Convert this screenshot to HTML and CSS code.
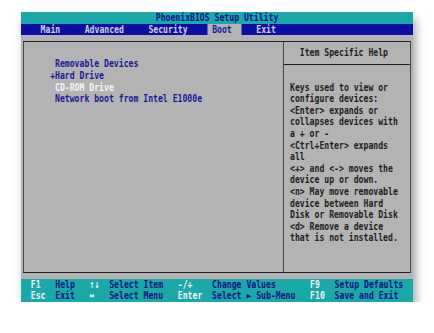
FILE: index.html
```html
<!DOCTYPE html>
<html lang="en">
<head>
    <meta charset="UTF-8">
    <meta name="viewport" content="width=device-width, initial-scale=1.0">
    <title>PhoenixBIOS Setup Utility</title>
    <link rel="stylesheet" href="styles.css">
</head>
<body>
    <div class="monitor">
        <div class="screen">
            <div class="title-bar">PhoenixBIOS Setup Utility</div>

            <div class="menu-bar">
                <span class="menu-item">Main</span>
                <span class="menu-item">Advanced</span>
                <span class="menu-item">Security</span>
                <span class="menu-item active">Boot</span>
                <span class="menu-item">Exit</span>
            </div>

            <div class="main">
                <div class="frame">
                    <div class="boot-list">
                        <div class="boot-item"><span class="marker"></span>Removable Devices</div>
                        <div class="boot-item"><span class="marker">+</span>Hard Drive</div>
                        <div class="boot-item selected"><span class="marker"></span>CD-ROM Drive</div>
                        <div class="boot-item"><span class="marker"></span>Network boot from Intel E1000e</div>
                    </div>

                    <div class="help">
                        <div class="help-title">Item Specific Help</div>
                        <div class="help-text">Keys used to view or
configure devices:
&lt;Enter&gt; expands or
collapses devices with
a + or -
&lt;Ctrl+Enter&gt; expands
all
&lt;+&gt; and &lt;-&gt; moves the
device up or down.
&lt;n&gt; May move removable
device between Hard
Disk or Removable Disk
&lt;d&gt; Remove a device
that is not installed.</div>
                    </div>
                </div>
            </div>

            <div class="footer">
                <span class="key">F1</span><span class="desc">Help</span>
                <span class="key">&uarr;&darr;</span><span class="desc">Select Item</span>
                <span class="key">-/+</span><span class="desc">Change Values</span>
                <span class="key">F9</span><span class="desc">Setup Defaults</span>

                <span class="key">Esc</span><span class="desc">Exit</span>
                <span class="key">&harr;</span><span class="desc">Select Menu</span>
                <span class="key">Enter</span><span class="desc">Select &#9658; Sub-Menu</span>
                <span class="key">F10</span><span class="desc">Save and Exit</span>
            </div>
        </div>
    </div>
</body>
</html>
```

FILE: styles.css
```css
:root {
    --teal: #1ba8a8;
    --blue: #0e0ea4;
    --gray: #b3b3b3;
    --ink: #1a1a9a;
    --dark: #222222;
    --row: 11.6px;
    --vline: 1.35px;
}

body {
    margin: 0;
    background-color: #ffffff;
}

.monitor {
    width: 392px;
    margin: 12px 0 0 21px;
    overflow: hidden;
    box-shadow: 3px 7px 9px rgba(0, 0, 0, 0.35);
}

/* 80x25 text screen, drawn wide then squeezed to 392px */
.screen {
    width: 80ch;
    font-family: 'DejaVu Sans Mono', 'Liberation Mono', monospace;
    font-size: 11px;
    font-weight: bold;
    line-height: var(--row);
    transform: scaleX(0.74);
    transform-origin: left top;
}

.title-bar {
    height: var(--row);
    background-color: var(--teal);
    color: #12128c;
    text-align: center;
}

.menu-bar {
    display: flex;
    height: var(--row);
    padding-left: 4ch;
    background-color: var(--blue);
    color: #cfcfdc;
}

.menu-item {
    margin-right: 5ch;
}

.menu-item.active {
    margin-left: -1ch;
    margin-right: 3ch;
    padding: 0 2ch 0 1ch;
    background-color: var(--gray);
    color: var(--ink);
}

.main {
    display: flex;
    height: calc(var(--row) * 21);
    box-sizing: border-box;
    padding: 5.8px 0.5ch;
    background-color: var(--gray);
}

.frame {
    flex: 1;
    display: grid;
    grid-template-columns: calc(53ch - var(--vline)) 1fr;
    border: 1px solid var(--dark);
    border-left-width: var(--vline);
    border-right-width: var(--vline);
}

.boot-list {
    padding: 16.4px 0 0 calc(5.5ch - var(--vline));
    color: var(--ink);
}

.boot-item {
    display: flex;
    white-space: pre;
}

.boot-item.selected {
    color: #f4f4f4;
}

.marker {
    width: 1ch;
}

.help {
    border-left: var(--vline) solid var(--dark);
    color: var(--dark);
}

.help-title {
    padding: 4.8px 0 5.8px calc(3.5ch - var(--vline));
    border-bottom: 1px solid var(--dark);
}

.help-text {
    padding: 16.4px 0 0 calc(1.5ch - var(--vline));
    white-space: pre;
}

.footer {
    display: grid;
    grid-template-columns: 5ch 7ch 4ch 14ch 7ch 20ch 5ch auto;
    padding-left: 2ch;
    background-color: var(--teal);
    white-space: pre;
}

.key {
    color: #f2f2f2;
}

.desc {
    color: #141482;
}
```
